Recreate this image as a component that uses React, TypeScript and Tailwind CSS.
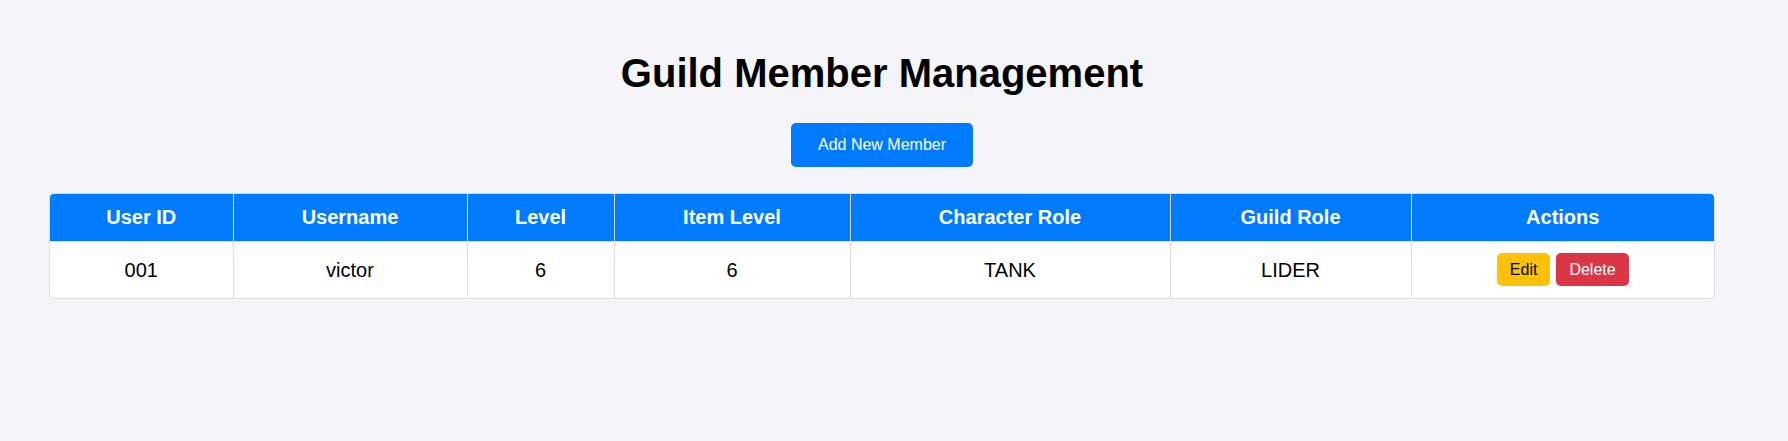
const members = [
  {
    id: '001',
    username: 'victor',
    level: 6,
    itemLevel: 6,
    characterRole: 'TANK',
    guildRole: 'LIDER',
  },
];

const columns = [
  { label: 'User ID', width: 'w-[183px]' },
  { label: 'Username', width: 'w-[234px]' },
  { label: 'Level', width: 'w-[147px]' },
  { label: 'Item Level', width: 'w-[236px]' },
  { label: 'Character Role', width: 'w-[320px]' },
  { label: 'Guild Role', width: 'w-[241px]' },
  { label: 'Actions', width: 'w-[303px]' },
];

const App = () => {
  return (
    <div className="min-h-[441px] w-full bg-[#f4f4f9] font-['Liberation_Sans',Arial,sans-serif] text-black">
      <div className="flex w-[1764px] flex-col items-center pt-[50px]">
        <h1 className="text-[40px] font-bold leading-[46px]">Guild Member Management</h1>
        <button
          type="button"
          className="mt-[27px] h-[44px] cursor-pointer rounded-[5px] bg-[#007bff] px-[27px] text-[16px] text-white"
        >
          Add New Member
        </button>
        <div className="mt-[26px] overflow-hidden rounded-[5px] border border-[#dddddd] bg-white">
          <table className="w-[1662px] table-fixed border-collapse">
            <thead>
              <tr className="bg-[#007bff] text-white">
                {columns.map((col, i) => (
                  <th
                    key={col.label}
                    className={`${col.width} ${
                      i < columns.length - 1 ? 'border-r' : ''
                    } h-[47px] border-[#dddddd] p-0 text-center text-[20px] font-bold`}
                  >
                    {col.label}
                  </th>
                ))}
              </tr>
            </thead>
            <tbody>
              {members.map((m) => (
                <tr key={m.id} className="border-t border-[#dddddd] text-[20px]">
                  <td className="h-[57px] border-r border-[#dddddd] text-center">{m.id}</td>
                  <td className="border-r border-[#dddddd] text-center">{m.username}</td>
                  <td className="border-r border-[#dddddd] text-center">{m.level}</td>
                  <td className="border-r border-[#dddddd] text-center">{m.itemLevel}</td>
                  <td className="border-r border-[#dddddd] text-center">{m.characterRole}</td>
                  <td className="border-r border-[#dddddd] text-center">{m.guildRole}</td>
                  <td className="text-center">
                    <div className="flex items-center justify-center gap-[6px]">
                      <button
                        type="button"
                        className="h-[33px] cursor-pointer rounded-[5px] bg-[#ffc107] px-[13px] text-[16px] text-black"
                      >
                        Edit
                      </button>
                      <button
                        type="button"
                        className="h-[33px] cursor-pointer rounded-[5px] bg-[#dc3545] px-[13px] text-[16px] text-white"
                      >
                        Delete
                      </button>
                    </div>
                  </td>
                </tr>
              ))}
            </tbody>
          </table>
        </div>
      </div>
    </div>
  );
};

export default App;
